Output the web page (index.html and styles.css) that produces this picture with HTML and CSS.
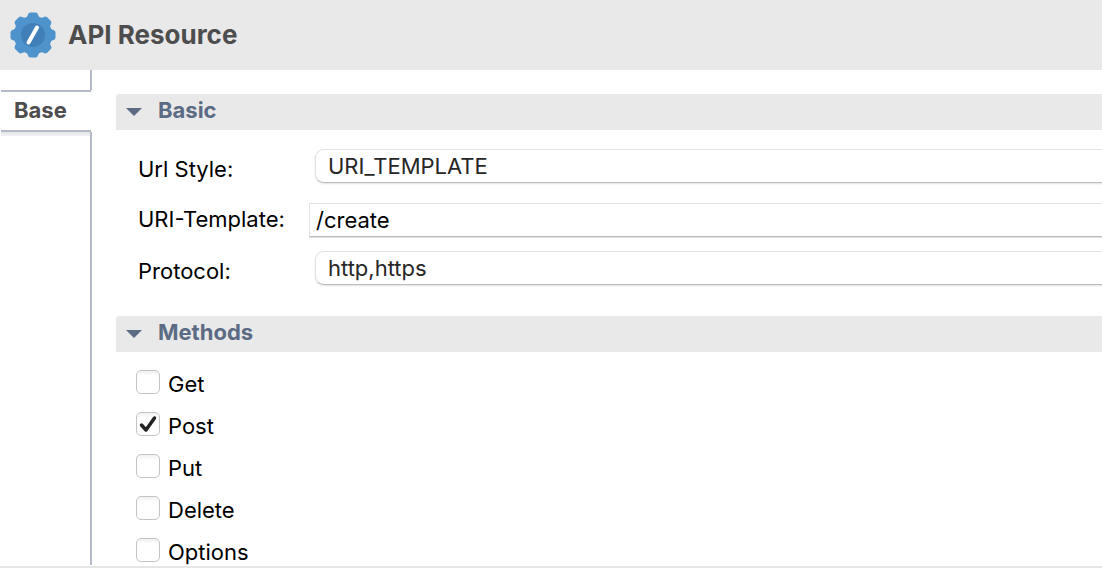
FILE: index.html
```html
<!DOCTYPE html>
<html lang="en">
<head>
<meta charset="utf-8">
<meta name="viewport" content="width=device-width, initial-scale=1">
<title>API Resource</title>
<link rel="stylesheet" href="styles.css">
</head>
<body>
<div class="editor">
  <header class="header">
    <svg class="gear" viewBox="0 0 46 46" aria-hidden="true">
      <g fill="#4f93cd">
        <circle cx="23" cy="23" r="19"/>
        <path id="tooth" d="M13 6.500C17 6 17.500 4 18 2.500Q18.500.5 20.500.5H25.500Q27.500.5 28 2.500C28.500 4 29 6 33 6.500V39.500C29 40 28.500 42 28 43.500Q27.500 45.500 25.500 45.500H20.500Q18.500 45.500 18 43.500C17.500 42 17 40 13 39.500Z"/>
        <use href="#tooth" transform="rotate(45 23 23)"/>
        <use href="#tooth" transform="rotate(90 23 23)"/>
        <use href="#tooth" transform="rotate(135 23 23)"/>
      </g>
      <circle cx="23" cy="23" r="12" fill="#417fb8"/>
      <path d="M18.500 30.500 27 15.500" stroke="#fff" stroke-width="4" stroke-linecap="round"/>
    </svg>
    <h1 class="title">API Resource</h1>
  </header>
  <div class="body">
    <nav class="tabs">
      <div class="rail-top"></div>
      <button class="tab" type="button">Base</button>
      <div class="rail"></div>
    </nav>
    <main class="content">
      <section>
        <h2 class="section-heading">
          <button class="section-toggle" type="button" aria-expanded="true"><svg class="arrow" viewBox="0 0 16 8" aria-hidden="true"><path d="M0 0h16L8 8z"/></svg>Basic</button>
        </h2>
        <div class="fields">
          <div class="field">
            <label class="label" for="style">Url Style:</label>
            <select class="select" id="style"><option>URI_TEMPLATE</option></select>
          </div>
          <div class="field field-text">
            <label class="label" for="template">URI-Template:</label>
            <input class="input" id="template" type="text" value="/create">
          </div>
          <div class="field">
            <label class="label" for="protocol">Protocol:</label>
            <select class="select" id="protocol"><option>http,https</option></select>
          </div>
        </div>
      </section>
      <section>
        <h2 class="section-heading">
          <button class="section-toggle" type="button" aria-expanded="true"><svg class="arrow" viewBox="0 0 16 8" aria-hidden="true"><path d="M0 0h16L8 8z"/></svg>Methods</button>
        </h2>
        <div class="methods">
          <label class="method"><span class="box"><input class="check" type="checkbox"></span><span class="method-name">Get</span></label>
          <label class="method"><span class="box"><input class="check" type="checkbox" checked><svg class="tick" viewBox="0 0 24 24" aria-hidden="true"><path d="M5.500 13 10 18 18.500 6"/></svg></span><span class="method-name">Post</span></label>
          <label class="method"><span class="box"><input class="check" type="checkbox"></span><span class="method-name">Put</span></label>
          <label class="method"><span class="box"><input class="check" type="checkbox"></span><span class="method-name">Delete</span></label>
          <label class="method"><span class="box"><input class="check" type="checkbox"></span><span class="method-name">Options</span></label>
        </div>
      </section>
    </main>
  </div>
</div>
</body>
</html>
```
FILE: styles.css
```css
* {
  box-sizing: border-box;
}

body {
  margin: 0;
  background: #fff;
  color: #000;
  font-family: Inter, "Liberation Sans", sans-serif;
  font-size: 22px;
}

button,
input,
select {
  margin: 0;
  font: inherit;
}

.editor {
  display: flex;
  flex-direction: column;
  min-height: 100vh;
  overflow: hidden;
  border-bottom: 2px solid #e6e6e6;
}

.header {
  display: flex;
  align-items: center;
  gap: 12px;
  height: 70px;
  padding: 0 10px;
  background: #e9e9e9;
}

.gear {
  width: 46px;
  height: 46px;
}

.title {
  margin: 0;
  color: #4d4d4d;
  font-size: 26px;
  font-weight: 700;
  line-height: 30px;
}

.body {
  display: flex;
  flex: 1;
}

.tabs {
  display: flex;
  flex-direction: column;
  width: 92px;
  padding-bottom: 1px;
}

.rail-top {
  height: 20px;
  border-right: 2px solid #b5bac9;
}

.tab {
  height: 42px;
  margin: 0 1px;
  padding: 0 0 2px 13px;
  border: solid #b5bac9;
  border-width: 2px 0;
  background: #fff;
  color: #4d4d4d;
  font-weight: 700;
  text-align: left;
}

.rail {
  flex: 1;
  margin-left: 1px;
  border-right: 2px solid #b5bac9;
  background: linear-gradient(#e6e6ea, #f4f4f6) top / 100% 4px no-repeat;
}

.content {
  flex: 1;
  padding: 24px 0 0 24px;
}

.section-heading {
  margin: 0;
}

.section-toggle {
  display: flex;
  align-items: center;
  gap: 16px;
  width: 100%;
  height: 36px;
  padding: 0 10px 4px;
  border: 0;
  border-top-left-radius: 3px;
  background: #e9e9e9;
  color: #5c6b84;
  font-size: 22px;
  font-weight: 700;
  line-height: 32px;
}

.arrow {
  width: 16px;
  height: 8px;
  margin-top: 4px;
  fill: #5c6b84;
}

.fields {
  display: flex;
  flex-direction: column;
  gap: 14px;
  padding: 19px 0 31px 22px;
}

.field {
  display: flex;
  align-items: center;
}

.field:first-child {
  padding-bottom: 6px;
}

.label {
  width: 177px;
  padding-top: 6px;
  line-height: 28px;
}

.field-text .label {
  width: 171px;
  padding: 0 0 2px;
}

.select,
.input {
  flex: 1;
  height: 34px;
  margin-right: -12px;
  border: 1px solid #e2e2e2;
  border-bottom-color: #bdbdbd;
  background: #fff;
}

.select {
  padding: 0 12px;
  appearance: none;
  border-radius: 9px;
  box-shadow: 0 1px 2px #00000020;
  color: #262626;
}

.input {
  padding: 0 6px;
  border-radius: 0;
  box-shadow: 0 1px 0 #e0e0e0;
  color: #000;
}

.methods {
  display: flex;
  flex-direction: column;
  gap: 14px;
  padding: 18px 0 0 20px;
}

.method {
  display: flex;
  gap: 8px;
  height: 28px;
}

.box {
  display: grid;
  width: 24px;
  height: 24px;
}

.check,
.tick {
  grid-area: 1 / 1;
  width: 24px;
  height: 24px;
}

.check {
  appearance: none;
  border: 1px solid #c4c4c4;
  border-radius: 5px;
  background: linear-gradient(#f0f0f0, #fff 5px);
}

.tick {
  fill: none;
  stroke: #222;
  stroke-width: 3.5;
  stroke-linecap: round;
  stroke-linejoin: round;
  pointer-events: none;
}

.method-name {
  line-height: 28px;
}
```
